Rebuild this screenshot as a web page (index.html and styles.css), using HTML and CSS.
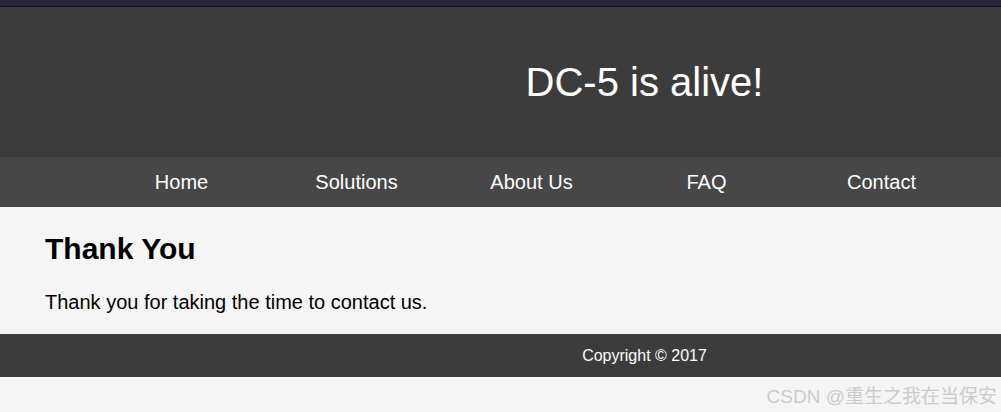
FILE: index.html
```html
<!DOCTYPE html>
<html>
<head>
<meta charset="utf-8">
<link rel="stylesheet" href="styles.css">
</head>
<body>
<div class="topbar"></div>
<header class="header">
  <h1 class="title">DC-5 is alive!</h1>
</header>
<nav class="nav">
  <a class="nav-item" href="#">Home</a>
  <a class="nav-item" href="#">Solutions</a>
  <a class="nav-item" href="#">About Us</a>
  <a class="nav-item" href="#">FAQ</a>
  <a class="nav-item" href="#">Contact</a>
</nav>
<main class="content">
  <h2 class="heading">Thank You</h2>
  <p class="text">Thank you for taking the time to contact us.</p>
</main>
<footer class="footer">Copyright © 2017</footer>
<div class="watermark">CSDN @重生之我在当保安</div>
</body>
</html>
```
FILE: styles.css
```css
html, body {
  margin: 0;
  padding: 0;
  background: #f5f5f5;
  font-family: "Liberation Sans", Arial, sans-serif;
}
.topbar {
  height: 6px;
  background: #28283a;
  border-bottom: 1px solid #111111;
}
.header {
  height: 150px;
  background: #3c3c3c;
  display: flex;
  align-items: center;
  justify-content: center;
  padding-left: 288px;
}
.title {
  margin: 0;
  color: #ffffff;
  font-size: 40px;
  font-weight: normal;
}
.nav {
  height: 50px;
  background: #474747;
  display: flex;
  align-items: center;
  padding-left: 94px;
}
.nav-item {
  width: 175px;
  text-align: center;
  color: #ffffff;
  font-size: 20px;
  text-decoration: none;
}
.content {
  box-sizing: border-box;
  height: 127px;
  padding: 25px 45px 0;
}
.heading {
  margin: 0;
  font-size: 30px;
  font-weight: bold;
  color: #000000;
}
.text {
  margin: 25px 0 0;
  font-size: 20px;
  color: #000000;
}
.footer {
  height: 43px;
  background: #3c3c3c;
  color: #ffffff;
  font-size: 16px;
  display: flex;
  align-items: center;
  justify-content: center;
  padding-left: 288px;
}
.watermark {
  position: absolute;
  right: 4px;
  top: 381px;
  font-size: 19px;
  color: #cccccc;
  font-family: "Liberation Sans", "Noto Sans CJK SC", sans-serif;
}
```
